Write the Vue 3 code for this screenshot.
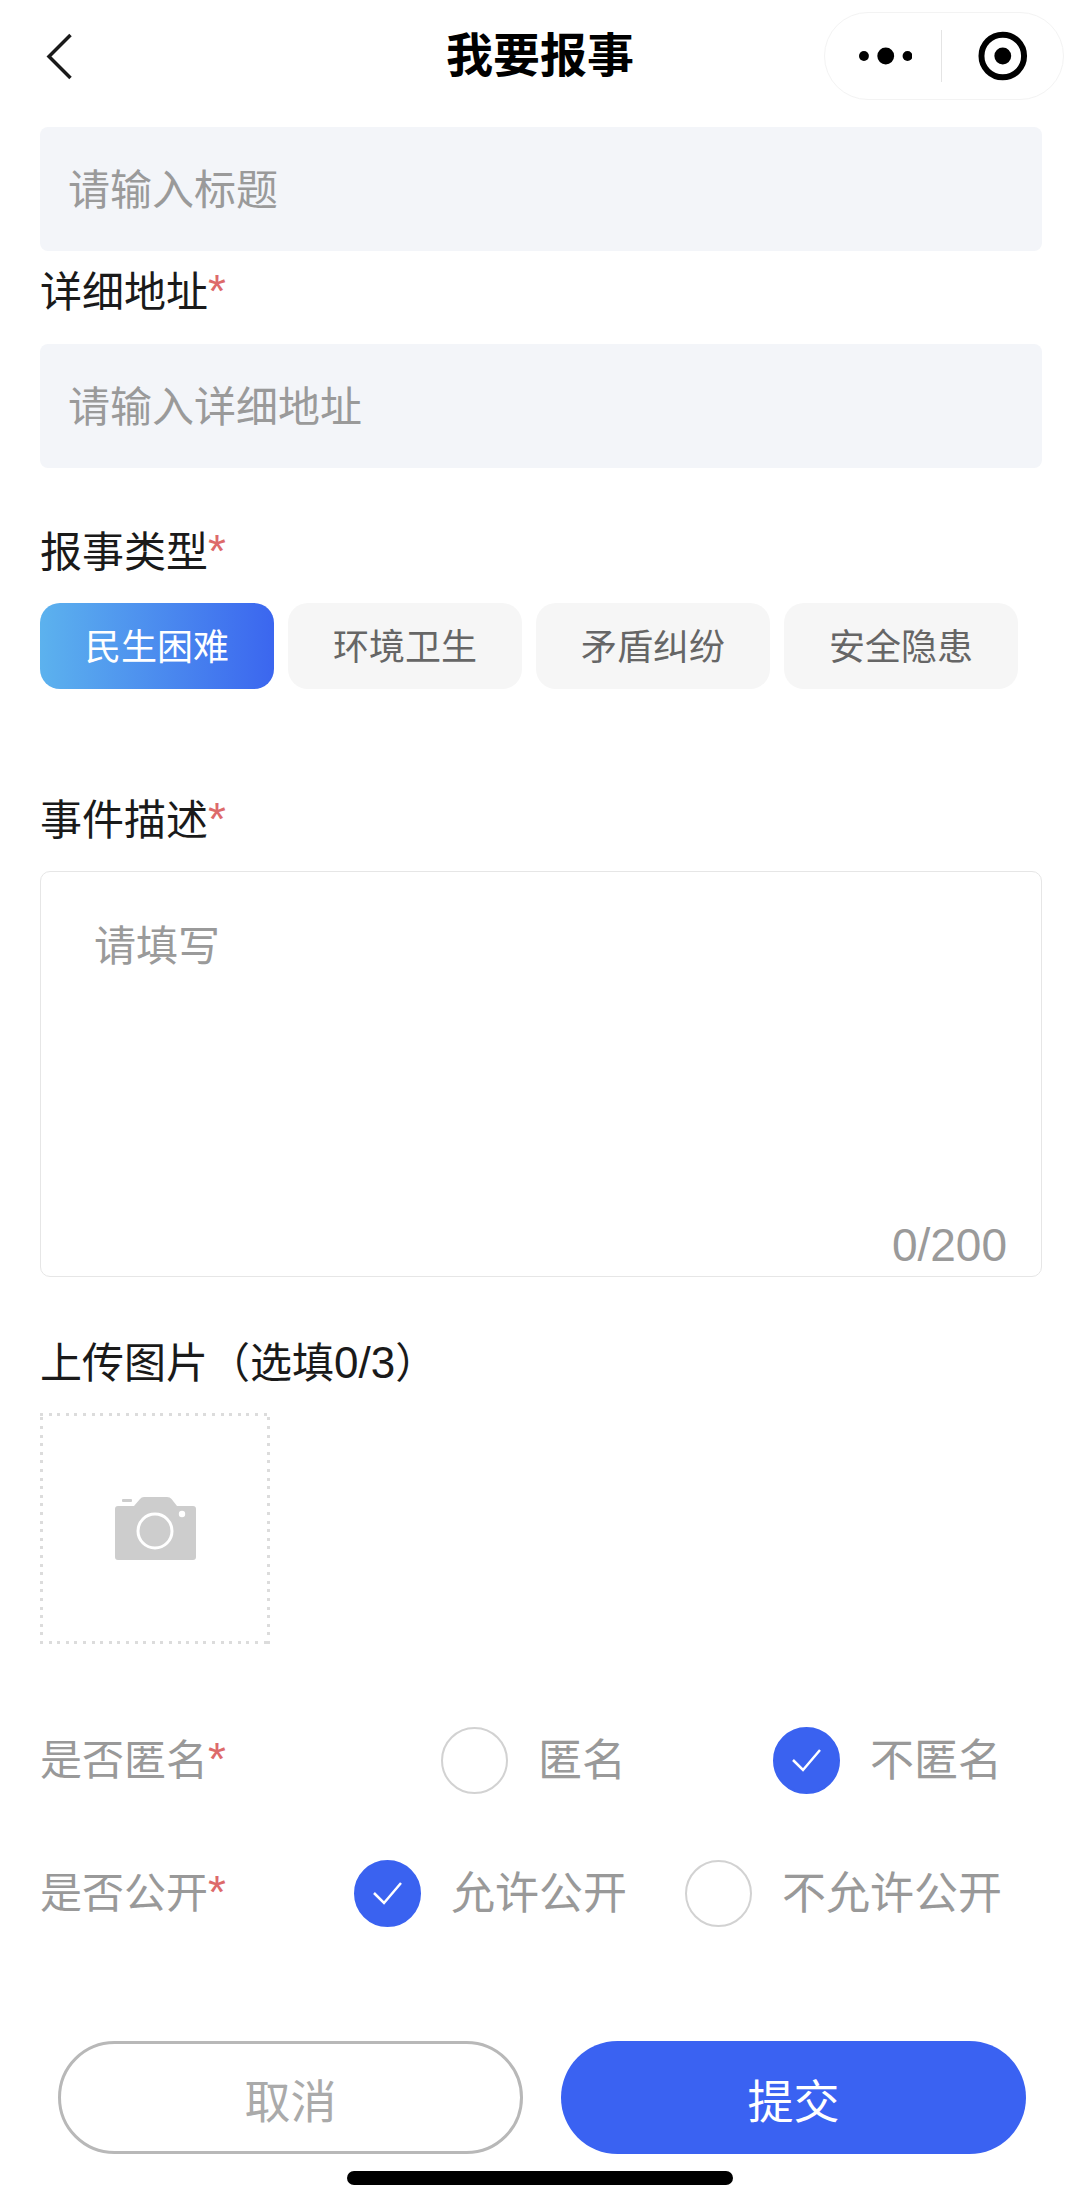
<template>
  <div class="page">
    <header class="nav">
      <svg class="back" width="27" height="47" viewBox="0 0 27 47">
        <path d="M24.5 2 L3 23.5 L24.5 45" fill="none" stroke="#1a1a1a" stroke-width="3.5" />
      </svg>
      <div class="nav-title">我要报事</div>
      <div class="capsule">
        <svg width="54" height="18" viewBox="0 0 54 18">
          <circle cx="5" cy="9" r="5" fill="#000" />
          <circle cx="27" cy="9" r="8.500" fill="#000" />
          <circle cx="49" cy="9" r="5" fill="#000" />
        </svg>
        <span class="capsule-line"></span>
        <svg width="50" height="50" viewBox="0 0 50 50">
          <circle cx="25" cy="25" r="21.5" fill="none" stroke="#000" stroke-width="6" />
          <circle cx="25" cy="25" r="8.5" fill="#000" />
        </svg>
      </div>
    </header>

    <main class="form">
      <div class="input first">请输入标题</div>

      <div class="label addr">详细地址<i>*</i></div>
      <div class="input">请输入详细地址</div>

      <div class="label type">报事类型<i>*</i></div>
      <div class="chips">
        <span
          v-for="(t, i) in types"
          :key="t"
          class="chip"
          :class="{ active: i === 0 }"
        >{{ t }}</span>
      </div>

      <div class="label desc">事件描述<i>*</i></div>
      <div class="textarea">
        <div class="ta-hint">请填写</div>
        <div class="ta-count">0/200</div>
      </div>

      <div class="label upload-label">上传图片（选填<span class="num">0/3</span>）</div>
      <div class="upload">
        <svg width="81" height="63" viewBox="0 0 81 63">
          <path
            d="M3 9 H19 L25 2 Q26.500 0 29 0 H52 Q55 0 56.500 2 L62 9 H78 Q81 9 81 12 V60 Q81 63 78 63 H3 Q0 63 0 60 V12 Q0 9 3 9 Z"
            fill="#cdcdcd"
          />
          <rect x="7" y="2" width="10" height="3" rx="1" fill="#cdcdcd" />
          <circle cx="40" cy="34" r="17" fill="none" stroke="#fff" stroke-width="3" />
          <circle cx="67" cy="17" r="3.200" fill="#fff" />
        </svg>
      </div>

      <div class="row row-a">
        <div class="label grey">是否匿名<i>*</i></div>
        <div class="opts gap-a">
          <span class="opt"><span class="radio"></span>匿名</span>
          <span class="opt"><span class="radio on"><svg width="31" height="27" viewBox="0 0 31 27"><path d="M2 13 L12 23 L29 3" fill="none" stroke="#fff" stroke-width="2.500" /></svg></span>不匿名</span>
        </div>
      </div>

      <div class="row row-b">
        <div class="label grey">是否公开<i>*</i></div>
        <div class="opts gap-b">
          <span class="opt"><span class="radio on"><svg width="31" height="27" viewBox="0 0 31 27"><path d="M2 13 L12 23 L29 3" fill="none" stroke="#fff" stroke-width="2.500" /></svg></span>允许公开</span>
          <span class="opt"><span class="radio"></span>不允许公开</span>
        </div>
      </div>
    </main>

    <footer class="actions">
      <button class="btn cancel">取消</button>
      <button class="btn submit">提交</button>
    </footer>
    <div class="home-bar"></div>
  </div>
</template>

<script setup>
const types = ['民生困难', '环境卫生', '矛盾纠纷', '安全隐患']
</script>

<style>
html, body { margin: 0; background: #fff; }
</style>

<style scoped>
.page {
  width: 1080px;
  height: 2186px;
  overflow: hidden;
  background: #fff;
  color: #1a1a1a;
  font-family: "Liberation Sans", "Noto Sans CJK SC", sans-serif;
}
.nav {
  display: grid;
  grid-template-columns: minmax(0, 1fr) auto minmax(0, 1fr);
  align-items: center;
  height: 112px;
  padding: 0 16px;
}
.back { justify-self: start; margin-left: 30px; }
.nav-title { font-size: 47px; font-weight: 700; line-height: 64px; color: #000; }
.capsule {
  justify-self: end;
  box-sizing: border-box;
  width: 240px;
  height: 88px;
  display: flex;
  align-items: center;
  padding: 0 35px 0 34px;
  border: 1px solid #f3f3f3;
  border-radius: 44px;
}
.capsule-line { width: 1px; height: 52px; background: #e4e4e4; margin: 0 36px 0 29px; }
.form { padding: 0 38px 0 40px; }
.input {
  box-sizing: border-box;
  height: 124px;
  padding: 0 0 5px 28px;
  display: flex;
  align-items: center;
  background: #f3f5f9;
  border-radius: 8px;
  font-size: 42px;
  color: #9a9a9a;
}
.input.first { margin-top: 15px; }
.label { font-size: 42px; line-height: 56px; color: #1a1a1a; }
.label i { font-style: normal; color: #dd6a6a; font-size: 46px; line-height: 40px; }
.label.addr { margin-top: 14px; margin-bottom: 23px; }
.label.type { margin-top: 57px; margin-bottom: 22px; }
.chips { display: flex; gap: 14px; }
.chip {
  box-sizing: border-box;
  width: 234px;
  height: 86px;
  padding-bottom: 4px;
  display: flex;
  align-items: center;
  justify-content: center;
  background: #f6f6f6;
  border-radius: 20px;
  font-size: 36px;
  color: #666;
}
.chip.active {
  background: linear-gradient(90deg, #5cb2ee, #3b66ef);
  color: #fff;
}
.label.desc { margin-top: 104px; margin-bottom: 22px; }
.textarea {
  box-sizing: border-box;
  height: 406px;
  padding: 47px 34px 0 53px;
  border: 1px solid #e6e6e6;
  border-radius: 10px;
  display: flex;
  flex-direction: column;
  justify-content: space-between;
  font-size: 42px;
  color: #9a9a9a;
}
.ta-hint { line-height: 56px; }
.ta-count { align-self: flex-end; line-height: 56px; margin-bottom: 3px; font-size: 46px; }
.label.upload-label { margin-top: 58px; margin-bottom: 21px; }
.num { font-size: 44px; }
.upload {
  box-sizing: border-box;
  width: 230px;
  height: 231px;
  display: flex;
  align-items: center;
  justify-content: center;
  background:
    repeating-linear-gradient(90deg, #dcdcdc 0 3px, transparent 3px 8.6px) top / 100% 3px no-repeat,
    repeating-linear-gradient(90deg, #dcdcdc 0 3px, transparent 3px 8.6px) bottom / 100% 3px no-repeat,
    repeating-linear-gradient(0deg, #dcdcdc 0 3px, transparent 3px 8.6px) left / 3px 100% no-repeat,
    repeating-linear-gradient(0deg, #dcdcdc 0 3px, transparent 3px 8.6px) right / 3px 100% no-repeat;
}
.row {
  display: flex;
  align-items: center;
  justify-content: space-between;
  padding-right: 40px;
}
.row-a { margin-top: 83px; }
.row-b { margin-top: 66px; }
.grey { color: #999; }
.opts { display: flex; }
.gap-a { gap: 147px; }
.gap-b { gap: 58px; }
.opt {
  display: flex;
  align-items: center;
  gap: 30px;
  font-size: 44px;
  line-height: 67px;
  color: #999;
}
.radio {
  box-sizing: border-box;
  width: 67px;
  height: 67px;
  border: 2px solid #d2d2d2;
  border-radius: 50%;
  display: flex;
  align-items: center;
  justify-content: center;
}
.radio.on { background: #3a62f0; border-color: #3a62f0; }
.actions {
  display: flex;
  gap: 38px;
  margin-top: 114px;
  padding-left: 58px;
}
.btn {
  box-sizing: border-box;
  width: 465px;
  height: 113px;
  border-radius: 57px;
  font-family: inherit;
  font-size: 46px;
  padding: 0;
}
.cancel { background: #fff; border: 3px solid #b8b8b8; color: #aaa; }
.submit { background: #3a62f2; border: none; color: #fff; }
.home-bar {
  width: 386px;
  height: 14px;
  margin: 17px auto 0;
  background: #000;
  border-radius: 7px;
}
</style>
